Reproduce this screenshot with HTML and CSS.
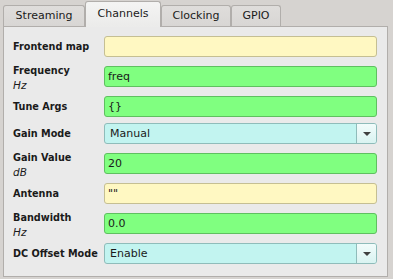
FILE: index.html
```html
<!DOCTYPE html>
<html lang="en">
<head>
    <meta charset="UTF-8">
    <title>Channels</title>
    <link rel="stylesheet" href="styles.css">
</head>
<body>
    <div class="tabs">
        <div class="tab tab-streaming">Streaming</div>
        <div class="tab tab-channels active">Channels</div>
        <div class="tab tab-clocking">Clocking</div>
        <div class="tab tab-gpio">GPIO</div>
    </div>

    <div class="pane">
        <div class="form">
            <div class="label">Frontend map</div>
            <div class="field yellow"></div>

            <div class="label two">Frequency<span class="unit">Hz</span></div>
            <div class="field green">freq</div>

            <div class="label">Tune Args</div>
            <div class="field green">{}</div>

            <div class="label">Gain Mode</div>
            <div class="field combo">
                <span class="combo-text">Manual</span>
                <span class="combo-btn"><span class="arrow"></span></span>
            </div>

            <div class="label two">Gain Value<span class="unit">dB</span></div>
            <div class="field green">20</div>

            <div class="label">Antenna</div>
            <div class="field yellow">""</div>

            <div class="label two">Bandwidth<span class="unit">Hz</span></div>
            <div class="field green">0.0</div>

            <div class="label">DC Offset Mode</div>
            <div class="field combo">
                <span class="combo-text">Enable</span>
                <span class="combo-btn"><span class="arrow"></span></span>
            </div>
        </div>
    </div>
</body>
</html>
```

FILE: styles.css
```css
body {
    margin: 0;
    width: 393px;
    height: 279px;
    background: #d6d3d0;
    font-family: "DejaVu Sans", sans-serif;
    font-size: 11px;
    color: #1a1a1a;
    overflow: hidden;
}

.tabs {
    display: flex;
    align-items: flex-end;
    height: 27px;
    padding-left: 3px;
    position: relative;
    z-index: 2;
}

.tab {
    height: 20px;
    line-height: 20px;
    text-align: center;
    box-sizing: content-box;
    background: linear-gradient(#dfdddb, #d8d6d4);
    border: 1px solid #b1aeab;
    border-bottom: none;
    border-radius: 3px 3px 0 0;
    margin-bottom: 1px;
}

.tab-streaming { width: 80px; }
.tab-channels { width: 74px; }
.tab-clocking { width: 68px; }
.tab-gpio { width: 48px; }

.tab.active {
    height: 25px;
    line-height: 23px;
    margin-bottom: 0;
    background: linear-gradient(#f4f4f3, #ebebea);
}

.pane {
    margin: -1px 5px 0 3px;
    background: #eaeaea;
    border: 1px solid #b1aeab;
    box-sizing: border-box;
    height: 251px;
}

.form {
    display: grid;
    grid-template-columns: 91px 1fr;
    grid-template-rows: 30px 30px 27px 30px 30px 30px 30px 21px;
    padding: 9px 10px 0 9px;
}

.label {
    font-weight: bold;
    font-size: 9.7px;
    line-height: 21px;
    white-space: nowrap;
}

.label.two {
    line-height: 14px;
    margin-top: -2px;
}

.unit {
    display: block;
    font-size: 10.5px;
    font-weight: normal;
    font-style: italic;
}

.field {
    height: 21px;
    box-sizing: border-box;
    border: 1px solid;
    border-radius: 3px;
    padding: 0 3px;
    line-height: 19px;
    white-space: pre;
}

.yellow {
    background: #fff8c2;
    border-color: #c5bf93;
}

.green {
    background: #80ff80;
    border-color: #5fc060;
}

.combo {
    display: flex;
    padding: 0;
    background: #c2f4f0;
    border-color: #8fbcba;
}

.combo-text {
    flex: 1;
    padding-left: 5px;
}

.combo-btn {
    width: 19px;
    border-left: 1px solid #8fbcba;
    background: linear-gradient(#f2fcfb, #d9f3f1);
    border-radius: 0 2px 2px 0;
    display: flex;
    align-items: center;
    justify-content: center;
}

.arrow {
    width: 0;
    height: 0;
    border-left: 4px solid transparent;
    border-right: 4px solid transparent;
    border-top: 4px solid #404040;
}
```
